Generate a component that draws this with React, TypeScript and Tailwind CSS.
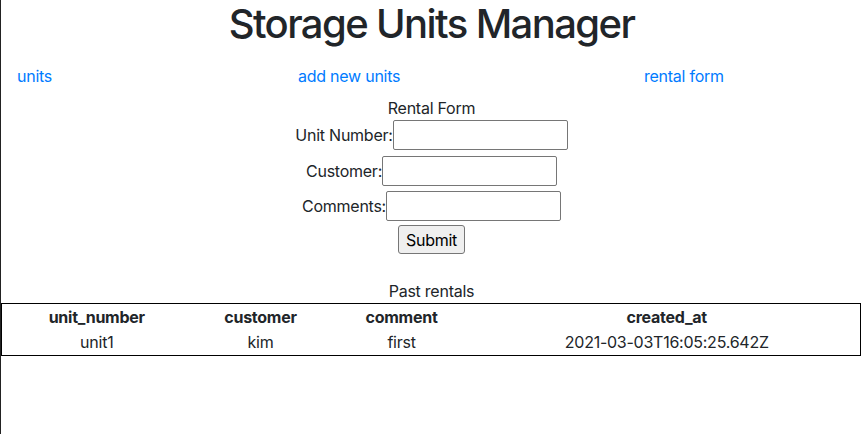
import React from 'react';

const rentals = [
  { unit_number: 'unit1', customer: 'kim', comment: 'first', created_at: '2021-03-03T16:05:25.642Z' },
];

function Field({ label }: { label: string }) {
  return (
    <div className="flex items-center justify-center h-[30px]">
      <label>{label}</label>
      <input
        type="text"
        className="w-[175px] h-[30px] border border-[#767676] rounded-[2px] px-[2px] bg-white"
      />
    </div>
  );
}

export default function App() {
  return (
    <div
      className="min-h-screen bg-white text-[#212529] text-base tracking-[-0.25px] border-l border-[#222]"
      style={{ fontFamily: 'Inter, "Noto Sans", sans-serif' }}
    >
      {/* Header */}
      <h1 className="text-[40px] leading-[48px] text-center font-medium tracking-[-1.6px]">Storage Units Manager</h1>

      {/* Nav */}
      <nav className="flex mt-[16px] h-6 leading-6 pl-[16px] text-[#007bff]">
        <div className="w-[281px]">
          <a href="#">units</a>
        </div>
        <div className="w-[346px]">
          <a href="#">add new units</a>
        </div>
        <div>
          <a href="#">rental form</a>
        </div>
      </nav>

      {/* Rental form */}
      <form className="mt-[8px] flex flex-col items-center" onSubmit={(e) => e.preventDefault()}>
        <div className="h-6 leading-6">Rental Form</div>
        <div className="flex flex-col gap-[5.5px] w-full">
          <Field label="Unit Number:" />
          <Field label="Customer:" />
          <Field label="Comments:" />
        </div>
        <button
          type="submit"
          className="mt-[4px] h-[29px] px-[7px] bg-[#efefef] border border-[#767676] rounded-[3px] text-[#000]"
        >
          Submit
        </button>
      </form>

      {/* Past rentals */}
      <div className="mt-[25px] text-center h-6 leading-6">Past rentals</div>
      <table className="w-[860px] border border-black border-collapse text-center">
        <thead>
          <tr className="h-[26px]">
            <th className="w-[190px] font-bold">unit_number</th>
            <th className="w-[138px] font-bold">customer</th>
            <th className="w-[144px] font-bold">comment</th>
            <th className="font-bold">created_at</th>
          </tr>
        </thead>
        <tbody>
          {rentals.map((r) => (
            <tr key={r.created_at} className="h-[26px]">
              <td>{r.unit_number}</td>
              <td>{r.customer}</td>
              <td>{r.comment}</td>
              <td>{r.created_at}</td>
            </tr>
          ))}
        </tbody>
      </table>
    </div>
  );
}
